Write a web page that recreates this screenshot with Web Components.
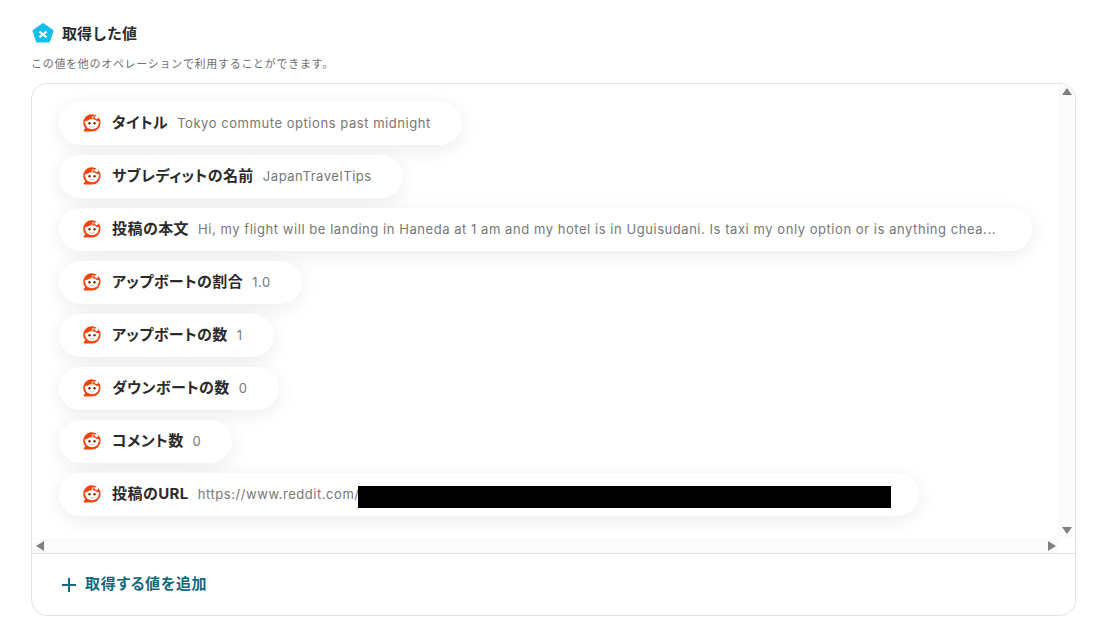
<!DOCTYPE html>
<html lang="ja">
<head>
<meta charset="utf-8">
<title>取得した値</title>
<style>
  html, body { margin: 0; background: #fff; }
  body { font-family: Inter, "Noto Sans CJK JP", sans-serif; color: #2b2b2b; }
</style>
</head>
<body>

<value-panel>
  <span slot="title">取得した値</span>
  <span slot="note">この値を他のオペレーションで利用することができます。</span>
  <value-pill label="タイトル" value="Tokyo commute options past midnight"></value-pill>
  <value-pill label="サブレディットの名前" value="JapanTravelTips"></value-pill>
  <value-pill label="投稿の本文" value="Hi, my flight will be landing in Haneda at 1 am and my hotel is in Uguisudani. Is taxi my only option or is anything chea..." style="padding-right: 36px"></value-pill>
  <value-pill label="アップボートの割合" value="1.0"></value-pill>
  <value-pill label="アップボートの数" value="1"></value-pill>
  <value-pill label="ダウンボートの数" value="0"></value-pill>
  <value-pill label="コメント数" value="0"></value-pill>
  <value-pill label="投稿のURL" value="https://www.reddit.com/" redacted></value-pill>
  <span slot="action">取得する値を追加</span>
</value-panel>

<script>
class RedditMark extends HTMLElement {
  constructor() {
    super();
    this.attachShadow({mode: "open"});
    this.shadowRoot.innerHTML = `
      <style>
        :host { display: block; width: 20px; height: 20px; flex: none; }
        svg { display: block; }
      </style>
      <svg width="20" height="20" viewBox="0 0 20 20">
        <path fill="#f1440f" d="M10 1.2a8.6 8.6 0 1 1 0 17.2H2.4c-.7 0-1-.8-.6-1.3l1.5-1.8A8.6 8.6 0 0 1 10 1.2z"/>
        <circle cx="14.6" cy="4.4" r="1.6" fill="#fff"/>
        <path d="M10 6.4 10.6 3.6 14 4.4" fill="none" stroke="#fff" stroke-width=".8"/>
        <circle cx="4.4" cy="9.4" r="1.7" fill="#ffe3d8"/>
        <circle cx="15.6" cy="9.4" r="1.7" fill="#ffe3d8"/>
        <ellipse cx="10" cy="11.2" rx="6.4" ry="5" fill="#fff"/>
        <circle cx="7.5" cy="10.2" r="1.2" fill="#7a2408"/>
        <circle cx="12.5" cy="10.2" r="1.2" fill="#7a2408"/>
        <path d="M7.6 13.2c1.4 1 3.4 1 4.8 0" fill="none" stroke="#c9b6ae" stroke-width=".9"/>
      </svg>`;
  }
}
customElements.define("reddit-mark", RedditMark);

class ValuePill extends HTMLElement {
  constructor() {
    super();
    this.attachShadow({mode: "open"});
    this.shadowRoot.innerHTML = `
      <style>
        :host {
          display: flex;
          align-items: center;
          width: max-content;
          height: 43px;
          box-sizing: border-box;
          padding: 0 31px 2px 23px;
          background: #fff;
          border-radius: 22px;
          box-shadow: 0 4px 20px rgba(0,0,0,.08);
          white-space: nowrap;
        }
        .label {
          margin-left: 10px;
          font-size: 15px;
          line-height: 20px;
          font-weight: 700;
          font-feature-settings: "palt";
          letter-spacing: .45px;
          color: #2b2b2b;
        }
        .value {
          position: relative;
          margin-left: 9px;
          font-size: 13px;
          letter-spacing: .55px;
          color: #777;
        }
        :host([redacted]) .value { padding-right: 528px; }
        .black {
          position: absolute;
          top: calc(50% - 8px);
          margin-left: -2px;
          width: 533px;
          height: 22px;
          background: #000;
        }
      </style>
      <reddit-mark></reddit-mark>
      <span class="label"></span>
      <span class="value"></span>`;
    this.shadowRoot.querySelector(".label").textContent = this.getAttribute("label");
    let value = this.shadowRoot.querySelector(".value");
    value.textContent = this.getAttribute("value");
    if (this.hasAttribute("redacted")) {
      value.insertAdjacentHTML("beforeend", `<span class="black"></span>`);
    }
  }
}
customElements.define("value-pill", ValuePill);

class ValuePanel extends HTMLElement {
  constructor() {
    super();
    this.attachShadow({mode: "open"});
    this.shadowRoot.innerHTML = `
      <style>
        :host {
          display: block;
          box-sizing: border-box;
          width: 1109px;
          height: 641px;
          padding: 22px 33px 25px 31px;
        }
        header {
          display: flex;
          align-items: center;
          gap: 8px;
          height: 22px;
          margin-left: 1px;
          font-size: 15px;
          font-weight: 700;
          color: #2b2b2b;
        }
        header .title { margin-top: -2px; }
        .note {
          margin-top: 13px;
          height: 15px;
          line-height: 15px;
          font-size: 11px;
          letter-spacing: .7px;
          color: #6f6f6f;
        }
        .box {
          margin-top: 11px;
          height: 533px;
          box-sizing: border-box;
          border: 1px solid #e3e3e3;
          border-radius: 16px;
          display: flex;
          flex-direction: column;
          overflow: hidden;
        }
        .view {
          flex: 1;
          min-height: 0;
          display: grid;
          grid-template-columns: 1fr 17px;
          grid-template-rows: 1fr 15px;
        }
        .list {
          display: flex;
          flex-direction: column;
          gap: 10px;
          padding: 18px 0 0 27px;
          overflow: hidden;
        }
        .vbar, .hbar { background: #fbfbfb; }
        .corner { background: #fff; }
        .vbar {
          display: flex;
          flex-direction: column;
          justify-content: space-between;
          align-items: center;
          padding: 4px 0;
        }
        .hbar {
          display: flex;
          justify-content: space-between;
          align-items: center;
          padding: 0 2px 0 4px;
        }
        svg { display: block; }
        footer {
          flex: none;
          height: 62px;
          box-sizing: border-box;
          border-top: 1px solid #e3e3e3;
          display: flex;
          align-items: center;
          gap: 8px;
          padding: 0 0 5px 29px;
          font-size: 15px;
          font-weight: 700;
          font-feature-settings: "palt";
          letter-spacing: .7px;
          color: #12687f;
        }
        footer svg { margin-top: 5px; }
      </style>
      <header>
        <svg width="22" height="22" viewBox="0 0 22 22">
          <path fill="#13bfea" stroke="#13bfea" stroke-width="2" stroke-linejoin="round" d="M11 2 20.5 8.8 17 19.5H5L1.5 8.8z"/>
          <path fill="none" stroke="#fff" stroke-width="2" d="M7.4 9.6 14.6 15.2M14.6 9.6 7.4 15.2"/>
        </svg>
        <span class="title"><slot name="title"></slot></span>
      </header>
      <div class="note"><slot name="note"></slot></div>
      <div class="box">
        <div class="view">
          <div class="list"><slot></slot></div>
          <div class="vbar">
            <svg width="10" height="7"><path fill="#808080" d="M5 0 10 7H0z"/></svg>
            <svg width="10" height="7"><path fill="#808080" d="M0 0H10L5 7z"/></svg>
          </div>
          <div class="hbar">
            <svg width="8" height="10"><path fill="#808080" d="M8 0V10L0 5z"/></svg>
            <svg width="8" height="10"><path fill="#808080" d="M0 0 8 5 0 10z"/></svg>
          </div>
          <div class="corner"></div>
        </div>
        <footer>
          <svg width="16" height="16" viewBox="0 0 16 16"><path fill="none" stroke="#12687f" stroke-width="2" d="M8 1V15M1 8H15"/></svg>
          <slot name="action"></slot>
        </footer>
      </div>`;
  }
}
customElements.define("value-panel", ValuePanel);
</script>
</body>
</html>
